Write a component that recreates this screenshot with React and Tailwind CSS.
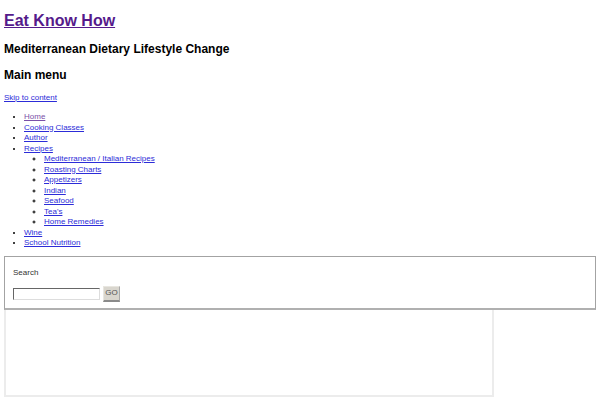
import React from 'react';

const menu = [
    { label: 'Home', visited: true },
    { label: 'Cooking Classes' },
    { label: 'Author' },
    {
        label: 'Recipes',
        children: ['Mediterranean / Italian Recipes', 'Roasting Charts', 'Appetizers', 'Indian', 'Seafood', "Tea's", 'Home Remedies'],
    },
    { label: 'Wine' },
    { label: 'School Nutrition' },
];

const App = () => {
    return (
        <div className="w-[600px] h-[400px] overflow-hidden bg-white text-black font-['Liberation_Sans',Arial,sans-serif]">
            <div className="px-1">
                {/* Header */}
                <h1 className="pt-[11px] text-[16px] leading-[20px] font-bold">
                    <a href="#" className="text-[#551a8b] underline">Eat Know How</a>
                </h1>
                <h2 className="mt-[11px] text-[12px] leading-[14px] font-bold">Mediterranean Dietary Lifestyle Change</h2>
                <h3 className="mt-[12px] text-[12px] leading-[14px] font-bold">Main menu</h3>
                <a href="#" className="block mt-[11px] text-[8px] leading-[10px] text-[#2c2cd8] underline">Skip to content</a>

                {/* Menu */}
                <ul className="mt-[9px] pl-[20px] list-disc text-[8px] leading-[10.5px]">
                    {menu.map(item => (
                        <li key={item.label}>
                            <a href="#" className={item.visited ? 'text-[#7a4fa8] underline' : 'text-[#2c2cd8] underline'}>{item.label}</a>
                            {item.children && (
                                <ul className="pl-[20px] list-[circle]">
                                    {item.children.map(c => (
                                        <li key={c}>
                                            <a href="#" className="text-[#2c2cd8] underline">{c}</a>
                                        </li>
                                    ))}
                                </ul>
                            )}
                        </li>
                    ))}
                </ul>

                {/* Search */}
                <div className="mt-[7px] h-[54px] border border-[#a3a3a3] border-b-2 border-b-[#b0b0b0] px-[8px] pt-[11px]">
                    <div className="text-[8px] leading-[10px] text-[#333]">Search</div>
                    <div className="mt-[8px] flex items-center gap-[3px]">
                        <input
                            type="text"
                            className="w-[87px] h-[12px] bg-white border border-[#ddd] border-t-[#666] border-l-[#666] outline-none"
                        />
                        <button
                            type="button"
                            className="w-[17px] h-[16px] bg-[#d9d6ce] border border-[#e8e6e0] border-b-2 border-b-[#8a8a8a] border-r-[#aaa] text-[8px] leading-[10px] text-[#555]"
                        >
                            GO
                        </button>
                    </div>
                </div>

                {/* Empty content box */}
                <div className="w-[490px] h-[87px] border-2 border-t-0 border-[#ececec]"></div>
            </div>
        </div>
    );
};

export default App;
